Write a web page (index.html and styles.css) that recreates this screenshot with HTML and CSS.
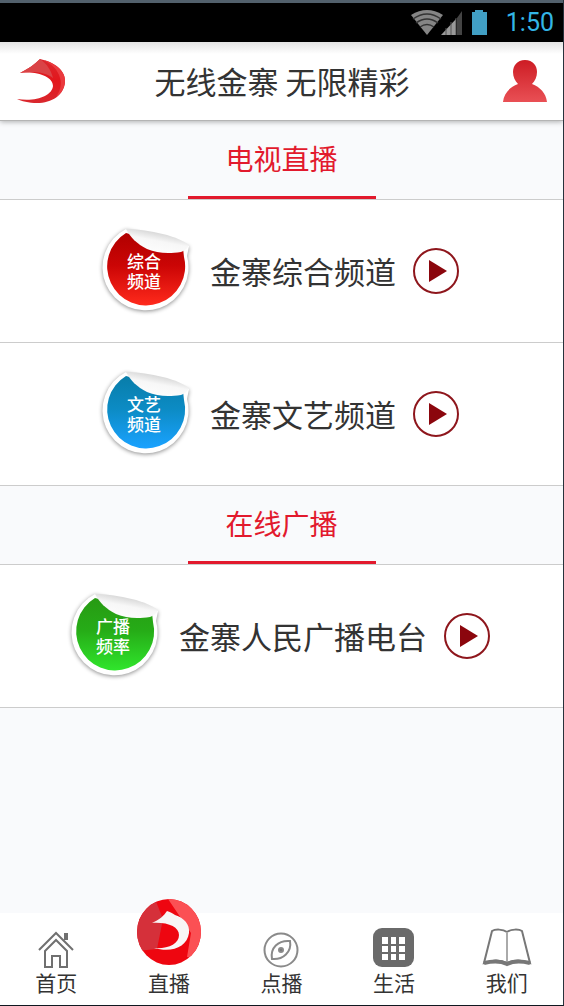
FILE: index.html
```html
<!DOCTYPE html>
<html lang="zh-CN">
<head>
  <meta charset="UTF-8">
  <meta name="viewport" content="width=device-width, initial-scale=1">
  <title>无线金寨 无限精彩</title>
  <link rel="stylesheet" href="styles.css">
</head>
<body>
  <div class="status-bar">
    <svg width="32" height="26" viewBox="0 0 32 26">
      <path d="M0 5Q16-5 32 5L16 25Z" fill="#858585"/>
      <path d="M2 9Q16-1 30 9M5 13Q16 5 27 13M9 17Q16 12 23 17" fill="none" stroke="#333" stroke-width="1.5"/>
    </svg>
    <svg class="signal" width="22" height="26" viewBox="0 0 22 26">
      <path d="M0 25L15 9V25Z" fill="#999"/>
      <path d="M16 8L21 1V25H16Z" fill="#444"/>
      <path d="M5 18V25M10 12V25M15 8V25" stroke="#555"/>
    </svg>
    <svg class="battery" width="17" height="26" viewBox="0 0 17 26">
      <path d="M1 2H4V0H12V2H16V25H1Z" fill="#419fc4"/>
    </svg>
    <span class="clock">1:50</span>
  </div>

  <header class="header">
    <a href="#" class="logo" aria-label="首页">
      <svg width="50" height="46" viewBox="0 0 50 46">
        <defs>
          <linearGradient id="swoosh" x1="0" y1="0" x2="0" y2="1">
            <stop offset="0" stop-color="#d9282e"/>
            <stop offset=".5" stop-color="#e3161c"/>
            <stop offset="1" stop-color="#d9282e"/>
          </linearGradient>
        </defs>
        <path d="M4 15C12 11 19 6 24 1C39 4 50 13 49 24C48 37 36 45 21 45C13 45 5 43 1 41C20 44 36 38 37 28C37 19 22 13 4 15Z" fill="url(#swoosh)"/>
        <path d="M4 15C12 11 19 6 24 1C31 6 35 12 37 20C29 14 17 13 4 15Z" fill="#da4346"/>
        <path d="M27 2C39 5 50 13 49 24C48 31 45 36 40 39C44 33 46 27 44 20C42 12 36 6 27 2Z" fill="#ea3a3e"/>
      </svg>
    </a>
    <h1>无线金寨 无限精彩</h1>
    <a href="#" class="user" aria-label="我的">
      <svg width="46" height="42" viewBox="0 0 46 42">
        <defs>
          <linearGradient id="user" x1="0" y1="0" x2="0" y2="1">
            <stop offset="0" stop-color="#cd1c24"/>
            <stop offset="1" stop-color="#e95055"/>
          </linearGradient>
        </defs>
        <path d="M23 0C31 0 35 6 35 12C35 17 33 21 30 24C38 27 44 33 45 42H1C2 33 8 27 16 24C13 21 11 17 11 12C11 6 15 0 23 0Z" fill="url(#user)"/>
      </svg>
    </a>
  </header>

  <main>
    <h2 class="section-title"><span>电视直播</span></h2>
    <a href="#" class="channel">
      <span class="badge">
        <svg width="90" height="90" viewBox="0 0 90 90">
          <defs>
            <linearGradient id="red" x1="0" y1="0" x2="0" y2="1">
              <stop offset="0" stop-color="#b00000"/>
              <stop offset=".45" stop-color="#cb0505"/>
              <stop offset="1" stop-color="#ff2a1c"/>
            </linearGradient>
            <linearGradient id="fold" x1="0" y1="1" x2=".5" y2="0">
              <stop offset="0" stop-color="#fff"/>
              <stop offset=".6" stop-color="#f7f7f7"/>
              <stop offset="1" stop-color="#ccc"/>
            </linearGradient>
          </defs>
          <path class="badge-edge" d="M26 3A43 43 0 1 0 87 30L89 20Z"/>
          <path d="M26 7A39 39 0 1 0 84 31L83 22Z" fill="url(#red)"/>
          <path d="M26 3C42 3 75 8 89 19C87 23 84 25 81 26C67 28 57 27 47 23C37 18 30 11 26 3Z" fill="url(#fold)"/>
        </svg>
        <span class="badge-text">综合频道</span>
      </span>
      <span class="channel-name">金寨综合频道</span>
      <svg class="play" width="46" height="46" viewBox="0 0 46 46">
        <circle cx="23" cy="23" r="22"/>
        <path d="M16 12L34 23L16 34Z"/>
      </svg>
    </a>
    <a href="#" class="channel">
      <span class="badge">
        <svg width="90" height="90" viewBox="0 0 90 90">
          <defs>
            <linearGradient id="blue" x1="0" y1="0" x2="0" y2="1">
              <stop offset="0" stop-color="#087da9"/>
              <stop offset=".45" stop-color="#0c8bc4"/>
              <stop offset="1" stop-color="#1aa2ff"/>
            </linearGradient>
          </defs>
          <path class="badge-edge" d="M26 3A43 43 0 1 0 87 30L89 20Z"/>
          <path d="M26 7A39 39 0 1 0 84 31L83 22Z" fill="url(#blue)"/>
          <path d="M26 3C42 3 75 8 89 19C87 23 84 25 81 26C67 28 57 27 47 23C37 18 30 11 26 3Z" fill="url(#fold)"/>
        </svg>
        <span class="badge-text">文艺频道</span>
      </span>
      <span class="channel-name">金寨文艺频道</span>
      <svg class="play" width="46" height="46" viewBox="0 0 46 46">
        <circle cx="23" cy="23" r="22"/>
        <path d="M16 12L34 23L16 34Z"/>
      </svg>
    </a>

    <h2 class="section-title"><span>在线广播</span></h2>
    <a href="#" class="channel">
      <span class="badge">
        <svg width="90" height="90" viewBox="0 0 90 90">
          <defs>
            <linearGradient id="green" x1="0" y1="0" x2="0" y2="1">
              <stop offset="0" stop-color="#279a13"/>
              <stop offset=".45" stop-color="#26ac17"/>
              <stop offset="1" stop-color="#30e52c"/>
            </linearGradient>
          </defs>
          <path class="badge-edge" d="M26 3A43 43 0 1 0 87 30L89 20Z"/>
          <path d="M26 7A39 39 0 1 0 84 31L83 22Z" fill="url(#green)"/>
          <path d="M26 3C42 3 75 8 89 19C87 23 84 25 81 26C67 28 57 27 47 23C37 18 30 11 26 3Z" fill="url(#fold)"/>
        </svg>
        <span class="badge-text">广播频率</span>
      </span>
      <span class="channel-name">金寨人民广播电台</span>
      <svg class="play" width="46" height="46" viewBox="0 0 46 46">
        <circle cx="23" cy="23" r="22"/>
        <path d="M16 12L34 23L16 34Z"/>
      </svg>
    </a>
  </main>

  <nav class="tab-bar">
    <a href="#">
      <svg width="36" height="37" viewBox="0 0 36 37" fill="none" stroke="#707070" stroke-width="2">
        <path d="M1 19L18 2L35 19M27 2V8H29V2"/>
        <path d="M7 20L18 9L29 20V36H22V25H14V36H7Z"/>
      </svg>
      <span>首页</span>
    </a>
    <a href="#" class="active">
      <svg width="64" height="66" viewBox="0 0 64 66">
        <defs>
          <clipPath id="disc"><ellipse cx="32" cy="33" rx="32" ry="33"/></clipPath>
        </defs>
        <g clip-path="url(#disc)">
          <path d="M0 0H64V66H0Z" fill="#ee0610"/>
          <path d="M0 0H18L26 20L20 50L0 52Z" fill="#d5303a"/>
          <path d="M31 0H64V58H50L54 34Z" fill="#fb5054"/>
        </g>
        <path d="M15 24C22 21 27 17 30 12C34 13 36 15 38 16C47 19 53 25 52 34C50 48 35 54 17 49C31 50 42 45 42 36C42 28 31 23 15 24Z" fill="#f8f5f5"/>
      </svg>
      <span>直播</span>
    </a>
    <a href="#">
      <svg width="36" height="36" viewBox="0 0 36 36" fill="none" stroke="#8a8a8a" stroke-width="2">
        <circle cx="18" cy="18" r="16.5"/>
        <path d="M9 27C7 16 15 8 27 9C29 20 20 28 9 27Z"/>
        <circle cx="18" cy="18" r="2" fill="#777"/>
      </svg>
      <span>点播</span>
    </a>
    <a href="#">
      <svg width="42" height="40" viewBox="0 0 42 40">
        <rect x="0" y="0" width="41" height="39" rx="9" fill="#6a6a6a"/>
        <path d="M9 9h6v7h-6zM18 9h5v7h-5zM26 9h6v7h-6zM9 18h6v6h-6zM18 18h5v6h-5zM26 18h6v6h-6zM9 26h6v6h-6zM18 26h5v6h-5zM26 26h6v6h-6z" fill="#fff"/>
      </svg>
      <span>生活</span>
    </a>
    <a href="#">
      <svg width="48" height="40" viewBox="0 0 48 40" fill="none" stroke="#777" stroke-width="2">
        <path d="M24 4C20 1 12 1 9 3L1 35C9 32 18 32 24 35C30 32 39 32 47 35L39 3C36 1 28 1 24 4Z"/>
        <path d="M24 4V35" stroke="#aaa"/>
        <path d="M1 35C9 33 18 33 24 36C30 33 39 33 47 35" stroke-width="4"/>
      </svg>
      <span>我们</span>
    </a>
  </nav>
</body>
</html>
```
FILE: styles.css
```css
* {
  box-sizing: border-box;
}
body {
  margin: 0;
  min-height: 100vh;
  display: flex;
  flex-direction: column;
  font-family: "Noto Sans CJK SC", sans-serif;
  color: #333;
  background-color: #f9fafc;
  border-right: 1px solid #28323c;
  border-bottom: 1px solid #101820;
}
a {
  color: inherit;
  text-decoration: none;
}
svg {
  display: block;
  flex: none;
  overflow: visible;
}
h1, h2 {
  margin: 0;
  font-weight: 400;
}
.status-bar {
  height: 42px;
  padding: 0 9px;
  display: flex;
  align-items: center;
  justify-content: flex-end;
  background-color: #000;
  border-top: 3px solid #52606c;
}
.status-bar svg:first-child {
  margin-right: -2px;
}
.signal {
  margin-right: 8px;
}
.battery {
  margin-right: 18px;
}
.clock {
  font-family: Roboto, sans-serif;
  font-size: 25px;
  line-height: 38px;
  color: #33b5e5;
}
.header {
  position: relative;
  height: 79px;
  padding: 0 15px 0 16px;
  display: flex;
  align-items: center;
  background: linear-gradient(#e4e4e4, #fff 12px);
  border-bottom: 1px solid #b4b4b4;
  box-shadow: 0 1px 5px rgba(0,0,0,0.3);
}
.header h1 {
  flex: 1;
  text-align: center;
  font-size: 31px;
  line-height: 40px;
}
.logo, .user {
  width: 50px;
  display: flex;
  justify-content: flex-end;
}
.section-title {
  height: 79px;
  display: flex;
  justify-content: center;
  border-bottom: 1px solid #ccc;
}
.section-title span {
  width: 188px;
  text-align: center;
  font-size: 28px;
  line-height: 75px;
  color: #e2192d;
  border-bottom: 3px solid #e2192d;
}
.channel {
  height: 143px;
  padding-right: 4px;
  display: flex;
  align-items: center;
  justify-content: center;
  background-color: #fff;
  border-bottom: 1px solid #ccc;
}
.channel-name {
  margin: 0 17px 0 20px;
  font-size: 31px;
  line-height: 44px;
}
.badge {
  position: relative;
}
.badge-edge {
  fill: #fff;
  filter: drop-shadow(0 1px 2px rgba(0,0,0,0.45));
}
.badge-text {
  position: absolute;
  top: 25px;
  left: 27px;
  width: 36px;
  font-size: 17px;
  font-weight: 500;
  line-height: 20px;
  color: #fff;
}
.play circle {
  fill: #fff;
  stroke: #8e161c;
  stroke-width: 2;
}
.play path {
  fill: #8b060d;
}
.tab-bar {
  height: 92px;
  margin-top: auto;
  display: grid;
  grid-template-columns: repeat(5, 1fr);
  background-color: #fff;
}
.tab-bar a {
  display: flex;
  flex-direction: column;
  align-items: center;
  justify-content: flex-end;
  padding-bottom: 9px;
  font-size: 21px;
  line-height: 28px;
}
/* the current tab's disc rises above the bar */
.tab-bar .active svg {
  margin-top: -20px;
  margin-bottom: 3px;
}
```
